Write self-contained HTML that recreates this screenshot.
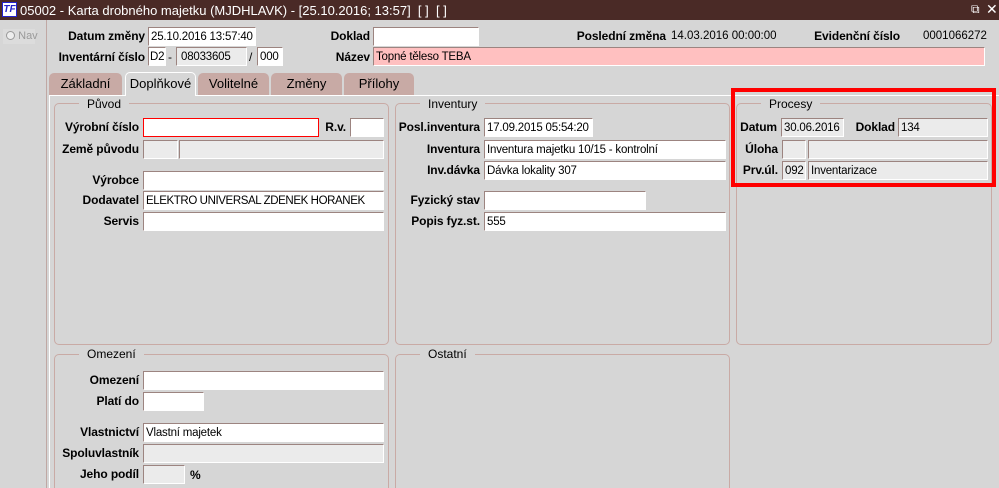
<!DOCTYPE html>
<html style="overflow:hidden;width:999px;height:488px"><head><meta charset="utf-8"><style>
*{margin:0;padding:0;box-sizing:border-box}
body{width:999px;height:488px;overflow:hidden;background:#d6d6d6;font-family:"Liberation Sans",Arial,sans-serif;font-size:12px;color:#000;position:relative}
.a{position:absolute;white-space:nowrap}
.t{position:absolute;top:0;left:0;width:999px;height:20px;background:#4a2a26;color:#fff;font-size:13px}
.l{position:absolute;font-weight:bold;text-align:right;white-space:nowrap;line-height:18px;letter-spacing:-0.1px}
.i{position:absolute;height:19px;background:#fff;border:1px solid #fff;border-top-color:#9c8480;border-left-color:#9c8480;padding-left:2px;padding-top:1px;line-height:16px;white-space:nowrap;overflow:hidden;font-size:11.5px;letter-spacing:-0.2px}
.g{background:#ebebeb}
.p{background:#ffc0c0}
.grp{position:absolute;border:1px solid #c9aaa5;border-radius:5px}
.gt{position:absolute;background:#d6d6d6;padding:0 8px;line-height:14px}
.tab{position:absolute;top:73px;height:22px;background:#c8aaa5;border-radius:5px 5px 0 0;text-align:center;line-height:22px;font-size:13px}
</style></head><body>
<div class="t"><div class="a" style="left:2px;top:2px;width:15px;height:15px;background:#fff;border:1px solid #22c;color:#22c;font-size:10px;font-weight:bold;font-style:italic;line-height:13px;text-align:center">TF</div><div class="a" style="left:20px;top:3px">05002 - Karta drobného majetku (MJDHLAVK) - [25.10.2016; 13:57]&nbsp; [ ]&nbsp; [ ]</div><div class="a" style="left:971px;top:2px;font-size:12px">⧉</div><div class="a" style="left:986px;top:1px;font-size:14px">✕</div></div>
<div class="a" style="left:0;top:20px;width:47px;height:468px;background:#d6d6d6;border-right:1px solid #c0a8a4"></div>
<div class="a" style="left:3px;top:29px;width:32px;height:15px;background:#dcdcdc;color:#9a9a9a;font-size:11px;line-height:15px">&nbsp;<span style="display:inline-block;width:9px;height:9px;border:1px solid #999;border-radius:50%;background:#eee;vertical-align:-1px"></span> Nav</div>

<div class="l" style="left:60px;top:27px;width:85px">Datum změny</div><div class="i" style="left:148px;top:27px;width:108px">25.10.2016 13:57:40</div>
<div class="l" style="left:300px;top:27px;width:70px">Doklad</div><div class="i" style="left:373px;top:27px;width:106px"></div>
<div class="l" style="left:560px;top:27px;width:106px">Poslední změna</div><div class="a" style="left:671px;top:30px;font-size:11.5px">14.03.2016 00:00:00</div>
<div class="l" style="left:800px;top:27px;width:100px">Evidenční číslo</div><div class="a" style="left:923px;top:30px;font-size:11.5px">0001066272</div>
<div class="l" style="left:50px;top:48px;width:95px">Inventární číslo</div>
<div class="i" style="left:148px;top:47px;width:18px;padding-left:1px">D2</div><div class="a" style="left:168px;top:50px">-</div>
<div class="i g" style="left:176px;top:47px;width:71px;padding-left:4px">08033605</div><div class="a" style="left:249px;top:50px">/</div>
<div class="i" style="left:257px;top:47px;width:26px">000</div>
<div class="l" style="left:320px;top:48px;width:50px">Název</div><div class="i p" style="left:373px;top:47px;width:612px">Topné těleso TEBA</div>

<div class="tab" style="left:49px;width:73px">Základní</div>
<div class="tab" style="left:125px;width:71px;background:#d6d6d6;border:1px solid #fff;border-bottom:none;top:72px;height:24px;z-index:2">Doplňkové</div>
<div class="tab" style="left:198px;width:71px">Volitelné</div>
<div class="tab" style="left:271px;width:71px">Změny</div>
<div class="tab" style="left:344px;width:70px">Přílohy</div>
<div class="a" style="left:49px;top:95px;width:950px;height:393px;border-top:1px solid #fff;border-left:1px solid #fff"></div>

<div class="grp" style="left:54px;top:103px;width:335px;height:242px"></div><div class="gt" style="left:79px;top:97px">Původ</div>
<div class="grp" style="left:395px;top:103px;width:335px;height:242px"></div><div class="gt" style="left:420px;top:97px">Inventury</div>
<div class="grp" style="left:736px;top:103px;width:256px;height:242px"></div><div class="gt" style="left:761px;top:97px">Procesy</div>
<div class="grp" style="left:54px;top:354px;width:335px;height:140px"></div><div class="gt" style="left:79px;top:347px">Omezení</div>
<div class="grp" style="left:395px;top:354px;width:335px;height:140px"></div><div class="gt" style="left:420px;top:347px">Ostatní</div>

<div class="l" style="left:50px;top:118px;width:89px">Výrobní číslo</div><div class="i" style="left:143px;top:118px;width:176px;border:1px solid #f00"></div>
<div class="l" style="left:320px;top:118px;width:26px">R.v.</div><div class="i" style="left:350px;top:118px;width:34px"></div>
<div class="l" style="left:50px;top:140px;width:89px">Země původu</div><div class="i g" style="left:143px;top:140px;width:35px"></div><div class="i g" style="left:179px;top:140px;width:205px"></div>
<div class="l" style="left:50px;top:171px;width:89px">Výrobce</div><div class="i" style="left:143px;top:171px;width:241px"></div>
<div class="l" style="left:50px;top:191px;width:89px">Dodavatel</div><div class="i" style="left:143px;top:191px;width:241px;letter-spacing:-0.4px">ELEKTRO UNIVERSAL ZDENEK HORANEK</div>
<div class="l" style="left:50px;top:212px;width:89px">Servis</div><div class="i" style="left:143px;top:212px;width:241px"></div>

<div class="l" style="left:395px;top:118px;width:85px">Posl.inventura</div><div class="i" style="left:484px;top:118px;width:109px">17.09.2015 05:54:20</div>
<div class="l" style="left:395px;top:140px;width:85px">Inventura</div><div class="i" style="left:484px;top:140px;width:242px">Inventura majetku 10/15 - kontrolní</div>
<div class="l" style="left:395px;top:161px;width:85px">Inv.dávka</div><div class="i" style="left:484px;top:161px;width:242px">Dávka lokality 307</div>
<div class="l" style="left:395px;top:191px;width:85px">Fyzický stav</div><div class="i" style="left:484px;top:191px;width:162px"></div>
<div class="l" style="left:395px;top:212px;width:85px">Popis fyz.st.</div><div class="i" style="left:484px;top:212px;width:242px">555</div>

<div class="l" style="left:736px;top:118px;width:41px">Datum</div><div class="i g" style="left:781px;top:118px;width:63px">30.06.2016</div>
<div class="l" style="left:850px;top:118px;width:45px">Doklad</div><div class="i g" style="left:898px;top:118px;width:90px">134</div>
<div class="l" style="left:736px;top:140px;width:42px">Úloha</div><div class="i g" style="left:782px;top:140px;width:24px"></div><div class="i g" style="left:808px;top:140px;width:180px"></div>
<div class="l" style="left:736px;top:161px;width:42px">Prv.úl.</div><div class="i g" style="left:782px;top:161px;width:24px">092</div><div class="i g" style="left:808px;top:161px;width:180px">Inventarizace</div>
<div class="a" style="left:731px;top:88px;width:265px;height:99px;border:4px solid #f00"></div>

<div class="l" style="left:50px;top:371px;width:89px">Omezení</div><div class="i" style="left:143px;top:371px;width:241px"></div>
<div class="l" style="left:50px;top:392px;width:89px">Platí do</div><div class="i" style="left:143px;top:392px;width:61px"></div>
<div class="l" style="left:50px;top:423px;width:89px">Vlastnictví</div><div class="i" style="left:143px;top:423px;width:241px">Vlastní majetek</div>
<div class="l" style="left:40px;top:444px;width:99px">Spoluvlastník</div><div class="i g" style="left:143px;top:444px;width:241px"></div>
<div class="l" style="left:50px;top:465px;width:89px">Jeho podíl</div><div class="i g" style="left:143px;top:465px;width:42px"></div><div class="a" style="left:190px;top:468px;font-weight:bold">%</div>
</body></html>
